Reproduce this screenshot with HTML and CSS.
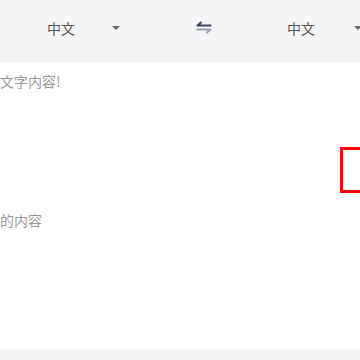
FILE: index.html
```html
<!DOCTYPE html>
<html>
<head>
    <title>翻译</title>
    <link rel="stylesheet" href="styles.css">
</head>
<body>
    <div class="lang-bar">
        <div class="lang-select">
            <span class="lang-name">中文</span>
            <span class="caret"></span>
        </div>
        <div class="swap">
            <svg width="16" height="13" viewBox="0 0 16 13">
                <path d="M1.5 4.5 H14.5 M1.5 4.5 L5 1.5" stroke="#3f4260" stroke-width="2" fill="none" stroke-linecap="round"/>
                <path d="M1.5 8.5 H14.5 M14.5 8.5 L11 11.5" stroke="#9c9eb3" stroke-width="2" fill="none" stroke-linecap="round"/>
            </svg>
        </div>
        <div class="lang-select lang-select-right">
            <span class="lang-name">中文</span>
            <span class="caret"></span>
        </div>
    </div>

    <div class="panel panel-input">
        <div class="placeholder">文字内容!</div>
        <div class="focus-box"></div>
    </div>

    <div class="panel panel-output">
        <div class="placeholder">的内容</div>
    </div>

    <div class="footer-bar"></div>
</body>
</html>
```

FILE: styles.css
```css
* {
    margin: 0;
    padding: 0;
    box-sizing: border-box;
}

html, body {
    width: 360px;
    height: 360px;
    overflow: hidden;
}

body {
    font-family: "Noto Sans CJK SC", "Noto Sans", sans-serif;
    background: #fff;
    display: flex;
    flex-direction: column;
}

.lang-bar {
    height: 62px;
    background: #f4f5f7;
    display: flex;
    align-items: center;
    padding: 0 0 7px 47px;
    flex-shrink: 0;
    white-space: nowrap;
}

.lang-select {
    display: flex;
    align-items: center;
    gap: 37px;
    flex-shrink: 0;
}

.lang-name {
    font-size: 14px;
    line-height: 20px;
    color: #555;
}

.caret {
    width: 0;
    height: 0;
    border-left: 4px solid transparent;
    border-right: 4px solid transparent;
    border-top: 4px solid #666;
    margin-top: 1px;
}

.swap {
    margin-left: 76px;
    margin-right: 75px;
    display: flex;
    align-items: center;
    flex-shrink: 0;
}

.lang-select-right {
    gap: 39px;
}

.panel {
    position: relative;
}

.panel-input {
    height: 140px;
    padding-top: 9px;
    flex-shrink: 0;
}

.panel-output {
    flex-grow: 1;
    padding-top: 8px;
}

.placeholder {
    font-size: 14px;
    line-height: 20px;
    color: #999;
    white-space: nowrap;
}

.focus-box {
    position: absolute;
    top: 85px;
    left: 340px;
    width: 30px;
    height: 46px;
    border: 3px solid #ff0000;
}

.footer-bar {
    height: 11px;
    background: #f4f5f7;
    flex-shrink: 0;
}
```
